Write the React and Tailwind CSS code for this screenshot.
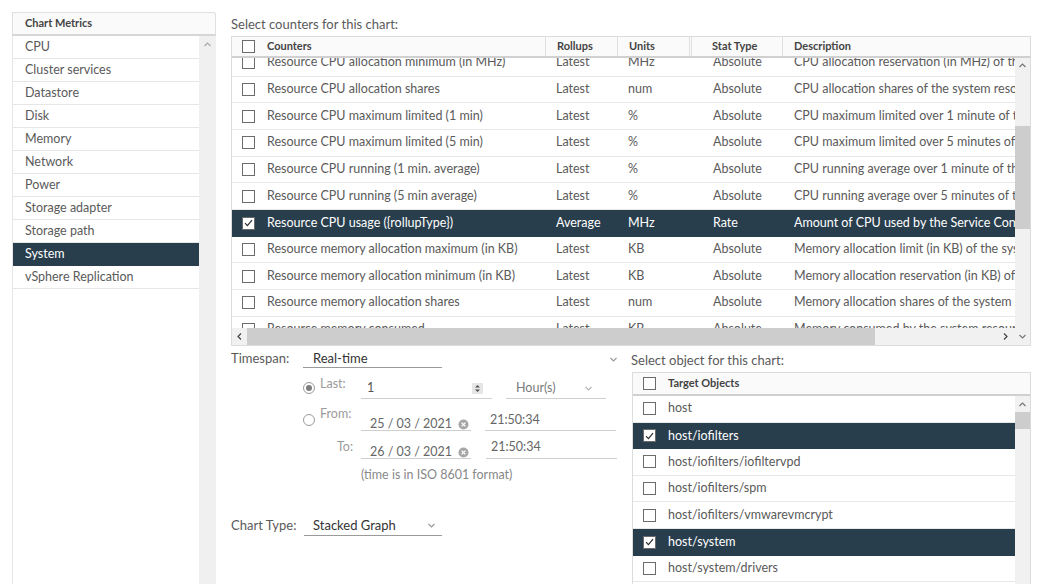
import React from 'react';

const counters = [
    ['Resource CPU allocation minimum (in MHz)', 'Latest', 'MHz', 'Absolute', 'CPU allocation reservation (in MHz) of the system resource group'],
    ['Resource CPU allocation shares', 'Latest', 'num', 'Absolute', 'CPU allocation shares of the system resource group'],
    ['Resource CPU maximum limited (1 min)', 'Latest', '%', 'Absolute', 'CPU maximum limited over 1 minute of the system resource group'],
    ['Resource CPU maximum limited (5 min)', 'Latest', '%', 'Absolute', 'CPU maximum limited over 5 minutes of the system resource group'],
    ['Resource CPU running (1 min. average)', 'Latest', '%', 'Absolute', 'CPU running average over 1 minute of the system resource group'],
    ['Resource CPU running (5 min average)', 'Latest', '%', 'Absolute', 'CPU running average over 5 minutes of the system resource group'],
    ['Resource CPU usage ({rollupType})', 'Average', 'MHz', 'Rate', 'Amount of CPU used by the Service Console and other applications', true],
    ['Resource memory allocation maximum (in KB)', 'Latest', 'KB', 'Absolute', 'Memory allocation limit (in KB) of the system resource group'],
    ['Resource memory allocation minimum (in KB)', 'Latest', 'KB', 'Absolute', 'Memory allocation reservation (in KB) of the system resource group'],
    ['Resource memory allocation shares', 'Latest', 'num', 'Absolute', 'Memory allocation shares of the system resource group'],
    ['Resource memory consumed', 'Latest', 'KB', 'Absolute', 'Memory consumed by the system resource group'],
];

const metrics = ['CPU', 'Cluster services', 'Datastore', 'Disk', 'Memory', 'Network', 'Power', 'Storage adapter', 'Storage path', 'System', 'vSphere Replication'];

const objects = [
    ['host'],
    ['host/iofilters', true],
    ['host/iofilters/iofiltervpd'],
    ['host/iofilters/spm'],
    ['host/iofilters/vmwarevmcrypt'],
    ['host/system', true],
    ['host/system/drivers'],
    ['host/system/kernel'],
];

const Box = ({ checked }) => (
    <span className="w-[13px] h-[13px] border border-[#6b6b6b] bg-white flex items-center justify-center shrink-0">
        {checked && (
            <svg width="9" height="8" viewBox="0 0 9 8">
                <path d="M1 4.2 L3.4 6.6 L8 1.2" stroke="#2b2b2b" strokeWidth="1.2" fill="none" />
            </svg>
        )}
    </span>
);

const Chevron = ({ dir = 'down', color = '#9a9a9a', size = 9 }) => {
    const d = {
        down: 'M1.5 3 L4.5 6 L7.5 3',
        up: 'M1.5 6 L4.5 3 L7.5 6',
        left: 'M6 1.5 L3 4.5 L6 7.5',
        right: 'M3 1.5 L6 4.5 L3 7.5',
    }[dir];
    return (
        <svg width={size} height={size} viewBox="0 0 9 9" className="shrink-0">
            <path d={d} stroke={color} strokeWidth="1.2" fill="none" />
        </svg>
    );
};

const Radio = ({ checked }) => (
    <span className="w-[12px] h-[12px] rounded-full border border-[#9a9a9a] bg-white flex items-center justify-center shrink-0">
        {checked && <span className="w-[6px] h-[6px] rounded-full bg-[#7d7d7d]" />}
    </span>
);

const ClearIcon = () => (
    <svg width="11" height="11" viewBox="0 0 11 11" className="shrink-0">
        <circle cx="5.5" cy="5.5" r="5" fill="#a6a6a6" />
        <path d="M3.6 3.6 L7.4 7.4 M7.4 3.6 L3.6 7.4" stroke="#fff" strokeWidth="1.3" />
    </svg>
);

const Spinner = () => (
    <svg width="11" height="11" viewBox="0 0 11 11" className="shrink-0">
        <rect x="0" y="0" width="11" height="11" fill="#e6e6e6" />
        <path d="M3 4.5 L5.5 2 L8 4.5 Z M3 6.5 L5.5 9 L8 6.5 Z" fill="#555" />
    </svg>
);

const DateField = ({ value }) => (
    <div className="w-[110px] h-[24px] border-b border-[#cfcfcf] flex items-end gap-[6px] pl-[9px] leading-[12px] text-[#666] whitespace-nowrap">
        <span>{value}</span>
        <ClearIcon />
    </div>
);

const App = () => {
    return (
        <div className="w-[1048px] h-[584px] overflow-hidden bg-white flex text-[13px] text-[#5a5a5a]" style={{ fontFamily: 'Lato, "Open Sans", sans-serif' }}>
            {/* Chart metrics list */}
            <aside className="mt-[12px] ml-[12px] w-[204px] flex flex-col shrink-0">
                <div className="h-[24px] border border-[#e0e0e0] border-b-2 border-b-[#d6d6d6] rounded-tr-[3px] bg-[#fafafa] flex items-center pl-[12px] text-[11px] font-bold text-[#444]">
                    Chart Metrics
                </div>
                <div className="flex flex-1">
                    <ul className="w-[187px] border-l border-[#e6e6e6] text-[12.5px]">
                        {metrics.map((m) => (
                            <li
                                key={m}
                                className={
                                    m === 'System'
                                        ? 'h-[23px] flex items-center pl-[12px] bg-[#293e4d] text-white'
                                        : 'h-[23px] flex items-center pl-[12px] border-b border-[#e6e6e6]'
                                }
                            >
                                {m}
                            </li>
                        ))}
                    </ul>
                    <div className="w-[17px] bg-[#f0f0f0] flex justify-center pt-[4px]">
                        <Chevron dir="up" color="#a8a8a8" />
                    </div>
                </div>
            </aside>

            {/* Main */}
            <main className="ml-[15px] w-[800px] flex flex-col">
                <div className="mt-[15px] h-[18px] leading-[18px]">Select counters for this chart:</div>

                {/* Counters table */}
                <div className="mt-[3px] h-[310px] border border-[#dcdcdc] flex flex-col">
                    <div className="h-[21px] shrink-0 bg-[#fafafa] border-b-2 border-[#d0d0d0] flex text-[11px] font-bold text-[#444]">
                        <div className="w-[25px] flex items-center pl-[10px]"><Box /></div>
                        <div className="w-[288px] flex items-center pl-[10px]">Counters</div>
                        <div className="w-[72px] flex items-center pl-[11px] border-l border-[#e0e0e0]">Rollups</div>
                        <div className="w-[72px] flex items-center pl-[11px] border-l border-[#e0e0e0]">Units</div>
                        <div className="w-[3px] border-l border-r border-[#e0e0e0]" />
                        <div className="w-[90px] flex items-center pl-[20px]">Stat Type</div>
                        <div className="flex-1 flex items-center pl-[11px] border-l border-[#e0e0e0]">Description</div>
                    </div>
                    <div className="flex flex-1 min-h-0">
                        <div className="w-[783px] flex flex-col">
                            <div className="flex-1 overflow-hidden text-[12.5px]">
                                <div className="-mt-[8px]">
                                    {counters.map((r) => (
                                        <div
                                            key={r[0]}
                                            className={
                                                r[5]
                                                    ? 'h-[26.67px] flex items-center whitespace-nowrap bg-[#293e4d] text-white'
                                                    : 'h-[26.67px] flex items-center whitespace-nowrap border-b border-[#e8e8e8]'
                                            }
                                        >
                                            <div className="w-[25px] shrink-0 pl-[10px]"><Box checked={r[5]} /></div>
                                            <div className="w-[288px] shrink-0 pl-[10px]">{r[0]}</div>
                                            <div className="w-[72px] shrink-0 pl-[11px]">{r[1]}</div>
                                            <div className="w-[75px] shrink-0 pl-[11px]">{r[2]}</div>
                                            <div className="w-[90px] shrink-0 pl-[21px]">{r[3]}</div>
                                            <div className="shrink-0 pl-[12px]">{r[4]}</div>
                                        </div>
                                    ))}
                                </div>
                            </div>
                            <div className="h-[17px] shrink-0 bg-[#f1f1f1] flex items-center">
                                <div className="w-[15px] flex justify-center"><Chevron dir="left" color="#444" /></div>
                                <div className="w-[628px] h-full bg-[#cdcdcd]" />
                                <div className="flex-1 flex justify-end pr-[5px]"><Chevron dir="right" color="#444" /></div>
                            </div>
                        </div>
                        <div className="w-[15px] bg-[#f1f1f1] flex flex-col items-center">
                            <div className="h-[14px] pt-[3px]"><Chevron dir="up" color="#777" /></div>
                            <div className="mt-[54px] w-full h-[103px] bg-[#cdcdcd]" />
                            <div className="mt-auto h-[17px] flex items-center"><Chevron dir="down" color="#777" /></div>
                        </div>
                    </div>
                </div>

                <div className="flex">
                    {/* Timespan form */}
                    <div className="w-[400px] flex flex-col">
                        <div className="mt-[4px] h-[18px] flex items-center">
                            <div className="w-[72px]">Timespan:</div>
                            <div className="w-[139px] h-[18px] border-b border-[#9a9a9a] pl-[10px] text-[#333] leading-[16px]">Real-time</div>
                            <div className="flex-1" />
                            <div className="mr-[13px]"><Chevron /></div>
                        </div>

                        <div className="mt-[11px] h-[20px] flex items-start text-[12.5px]">
                            <div className="w-[72px] shrink-0" />
                            <div className="mt-[3px]"><Radio checked /></div>
                            <div className="ml-[5px] w-[41px] -mt-[2px] leading-[14px] text-[#9a9a9a]">Last:</div>
                            <div className="w-[131px] h-[20px] border-b border-[#cfcfcf] flex items-center pl-[6px] pr-[9px] text-[#555]">
                                <span className="flex-1">1</span>
                                <Spinner />
                            </div>
                            <div className="ml-[14px] w-[100px] h-[20px] border-b border-[#cfcfcf] flex items-center pl-[10px] pr-[13px] text-[#7a7a7a]">
                                <span className="flex-1">Hour(s)</span>
                                <Chevron color="#b5b5b5" />
                            </div>
                        </div>

                        <div className="mt-[8px] h-[24px] flex items-start text-[12.5px]">
                            <div className="w-[72px] shrink-0" />
                            <div className="mt-[7px]"><Radio /></div>
                            <div className="ml-[5px] w-[41px] leading-[14px] text-[#9a9a9a]">From:</div>
                            <DateField value="25 / 03 / 2021" />
                            <div className="ml-[14px] w-[131px] h-[24px] border-b border-[#cfcfcf] pt-[6px] pl-[5px] leading-[14px] text-[#666]">21:50:34</div>
                        </div>

                        <div className="mt-[4px] h-[24px] flex items-start text-[12.5px]">
                            <div className="w-[106px] shrink-0" />
                            <div className="w-[24px] mt-[5px] leading-[14px] text-[#9a9a9a]">To:</div>
                            <DateField value="26 / 03 / 2021" />
                            <div className="ml-[15px] w-[131px] h-[24px] border-b border-[#cfcfcf] pt-[5px] pl-[5px] leading-[14px] text-[#666]">21:50:34</div>
                        </div>

                        <div className="mt-[9px] pl-[130px] leading-[14px] text-[12.5px] text-[#888]">(time is in ISO 8601 format)</div>

                        <div className="mt-[34px] h-[20px] flex items-center">
                            <div className="w-[73px]">Chart Type:</div>
                            <div className="w-[138px] h-[20px] border-b border-[#9a9a9a] flex items-center pl-[9px] pr-[6px] text-[#333]">
                                <span className="flex-1">Stacked Graph</span>
                                <Chevron />
                            </div>
                        </div>
                    </div>

                    {/* Target objects */}
                    <div className="w-[400px] flex flex-col">
                        <div className="mt-[5px] h-[18px] leading-[18px]">Select object for this chart:</div>
                        <div className="mt-[3px] ml-[1px] h-[230px] border border-[#dcdcdc] flex flex-col">
                            <div className="h-[23px] shrink-0 bg-[#fafafa] border-b-2 border-[#d0d0d0] flex items-center text-[11px] font-bold text-[#444]">
                                <div className="w-[35px] pl-[10px]"><Box /></div>
                                <div>Target Objects</div>
                            </div>
                            <div className="flex flex-1 min-h-0">
                                <div className="flex-1 overflow-hidden text-[12.5px]">
                                    {objects.map((o) => (
                                        <div
                                            key={o[0]}
                                            className={
                                                o[1]
                                                    ? 'h-[26.6px] flex items-center bg-[#293e4d] text-white'
                                                    : 'h-[26.6px] flex items-center border-b border-[#e8e8e8]'
                                            }
                                        >
                                            <div className="w-[35px] pl-[10px]"><Box checked={o[1]} /></div>
                                            <div>{o[0]}</div>
                                        </div>
                                    ))}
                                </div>
                                <div className="w-[15px] bg-[#f1f1f1] flex flex-col items-center">
                                    <div className="h-[16px] pt-[4px]"><Chevron dir="up" color="#777" /></div>
                                    <div className="w-full h-[17px] bg-[#cdcdcd]" />
                                </div>
                            </div>
                        </div>
                    </div>
                </div>
            </main>
        </div>
    );
};

export default App;
